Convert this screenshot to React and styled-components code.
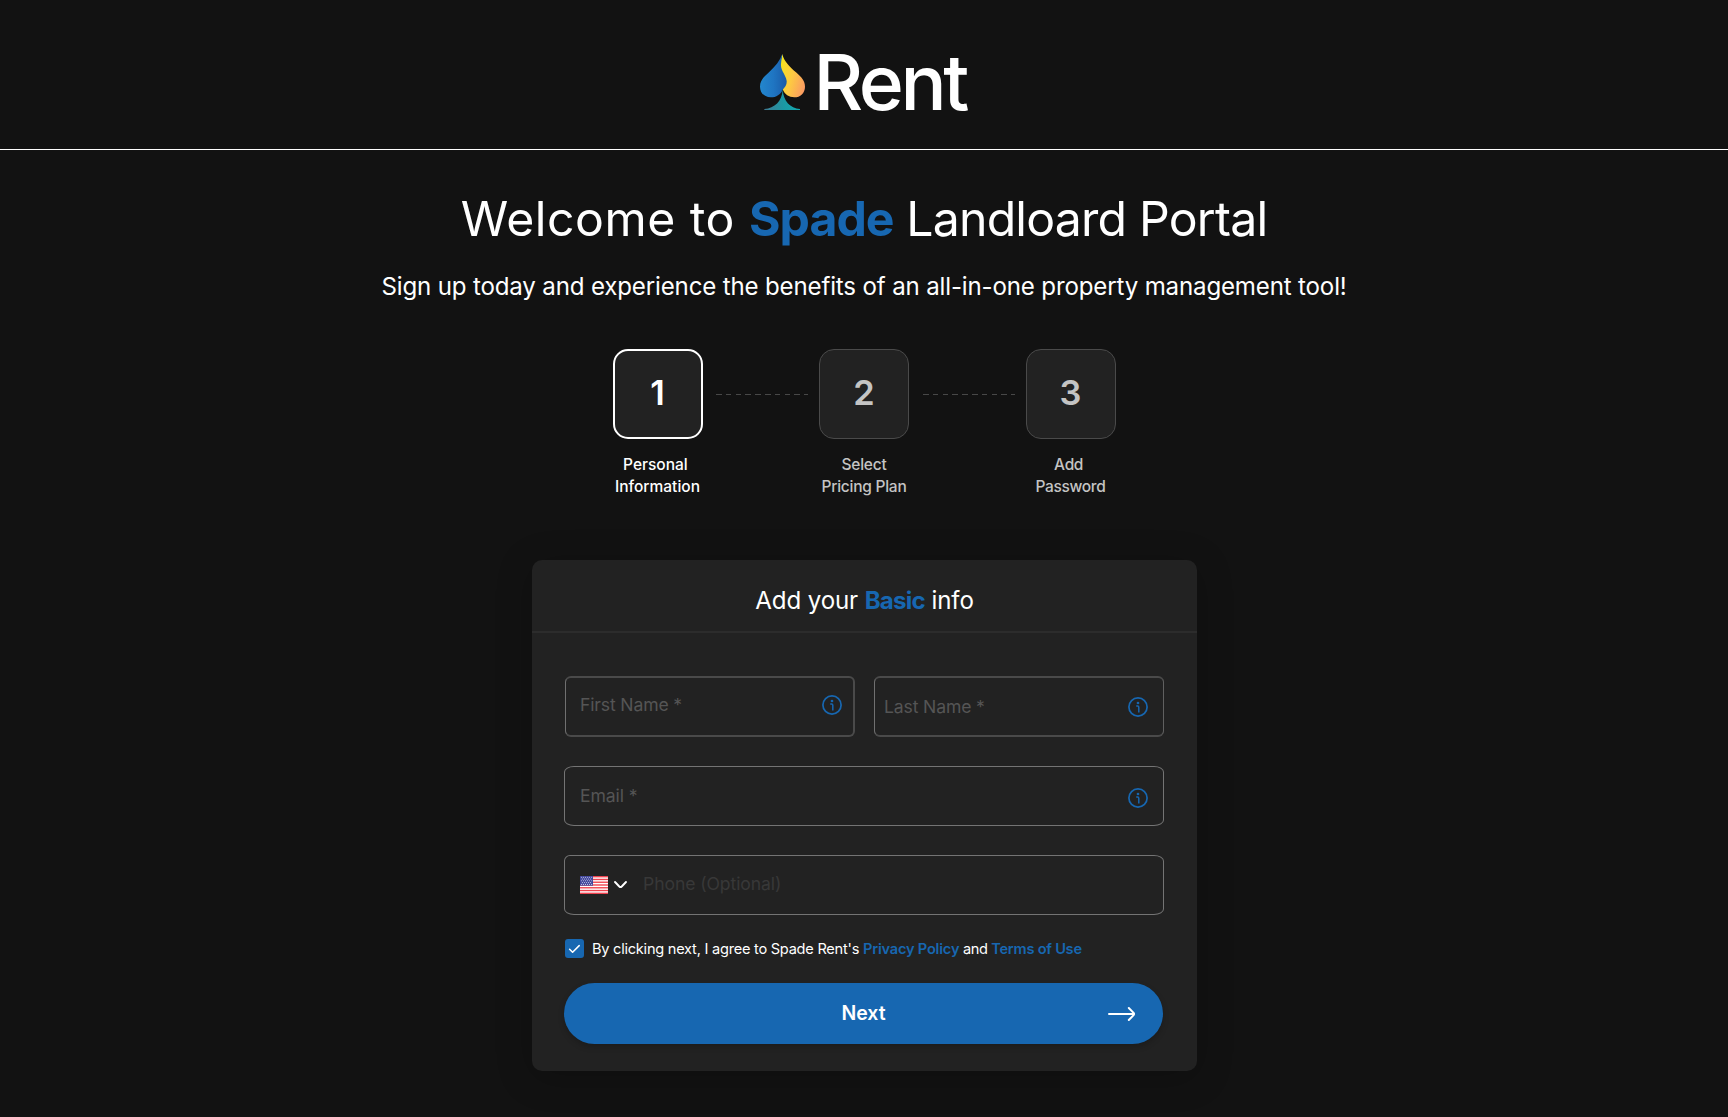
import React, { useState } from 'react';
import styled, { createGlobalStyle } from 'styled-components';

const blue = '#1767b1';

const GlobalStyle = createGlobalStyle`
  * { box-sizing: border-box; }
  body {
    margin: 0;
    background: #121212;
    color: #fff;
    font-family: Inter, 'Liberation Sans', sans-serif;
    overflow-x: hidden;
  }
`;

const Page = styled.div`
  min-height: 1117px;
  display: flex;
  flex-direction: column;
  align-items: center;
`;

const Header = styled.header`
  width: 100%;
  height: 150px;
  padding-top: 54px;
  border-bottom: 1px solid #fff;
  display: flex;
  justify-content: center;
`;

const Logo = styled.div`
  width: 209px;
  height: 57px;
  display: flex;
  gap: 8px;
`;

const LogoText = styled.span`
  font-size: 76.8px;
  font-weight: 530;
  line-height: 58px;
  letter-spacing: -3.4px;
  white-space: nowrap;
`;

const Segment = styled.span`
  letter-spacing: ${(p) => p.$track || 0}px;
`;

const Accent = styled(Segment)`
  color: ${blue};
  font-weight: ${(p) => p.$weight || 660};
`;

const Title = styled.h1`
  margin: 39px 0 0;
  font-size: 48.2px;
  font-weight: 370;
  line-height: 59px;
  white-space: nowrap;
`;

const Subtitle = styled.p`
  margin: 24px 0 0;
  font-size: 24.1px;
  font-weight: 370;
  line-height: 30px;
  letter-spacing: -0.165px;
  white-space: nowrap;
`;

const Steps = styled.div`
  display: flex;
  margin-top: 47px;
  height: 211px;
`;

const Step = styled.div`
  width: 90px;
  display: flex;
  flex-direction: column;
  align-items: center;
  color: ${(p) => (p.$active ? '#fff' : '#c4c4c4')};
`;

const StepBox = styled.div`
  width: 90px;
  height: 90px;
  flex: none;
  display: flex;
  align-items: center;
  justify-content: center;
  padding-bottom: 3px;
  border-radius: 15px;
  border: ${(p) => (p.$active ? '2px solid #fff' : '1px solid #4a4a4a')};
  background: #222;
  font-size: 34.4px;
  font-weight: 600;
`;

const StepLabel = styled.div`
  margin-top: 15px;
  font-size: 15.5px;
  font-weight: 500;
  line-height: 22.4px;
  text-align: center;
  white-space: pre;
  letter-spacing: ${(p) => p.$track}px;
`;

const Connector = styled.div`
  width: 92px;
  height: 1px;
  margin: 45px 11px 0 13.5px;
  background: repeating-linear-gradient(90deg, #484848 0 5.5px, transparent 5.5px 9.8px);
`;

const Card = styled.form`
  width: 665px;
  height: 511px;
  margin-left: 1px;
  border-radius: 10px;
  background: #222;
  box-shadow: 0 6px 36px rgba(0, 0, 0, 0.22);
`;

const CardHeader = styled.div`
  height: 73px;
  padding-top: 25px;
  border-bottom: 2px solid #2c2c2c;
  text-align: center;
  font-size: 24.1px;
  font-weight: 370;
  line-height: 32px;
  letter-spacing: -0.12px;
`;

const Fields = styled.div`
  padding: 43px 33px 0 32px;
  display: flex;
  flex-direction: column;
`;

const NameRow = styled.div`
  display: flex;
  gap: 19px;
  padding-left: 1px;
  margin-bottom: 29px;
`;

const Field = styled.label`
  display: flex;
  align-items: center;
  height: 60px;
  border: 1px solid #747474;
  border-radius: ${(p) => p.$corners || '10px / 6px'};
  padding: 0 15px;
`;

const NameField = styled(Field)`
  width: 290px;
  height: 61px;
  border-color: #4a4a4a;
  border-width: 2px ${(p) => (p.$last ? 1 : 2)}px 2px 1px;
  border-left-color: #707070;
  border-right-color: ${(p) => (p.$last ? '#606060' : '#4a4a4a')};
  border-radius: 6px;
  padding: ${(p) => (p.$last ? '0 15px 0 9px' : '0 11px 3px 14px')};
`;

const Input = styled.input`
  flex: 1;
  min-width: 0;
  height: 24px;
  padding: 0;
  border: 0;
  outline: 0;
  background: transparent;
  color: #fff;
  font: 400 17.6px/24px Inter, 'Liberation Sans', sans-serif;
  letter-spacing: ${(p) => p.$track}px;
  &::placeholder {
    color: ${(p) => p.$tint || '#555'};
    opacity: 1;
  }
`;

const PhoneField = styled(Field)`
  margin-top: 29px;
`;

const CountryPicker = styled.div`
  display: flex;
  align-items: center;
  gap: 5px;
  width: 63px;
`;

const PhoneInput = styled(Input)`
  margin-bottom: 3px;
`;

const IconSlot = styled.span`
  display: flex;
  padding-top: ${(p) => p.$drop || 0}px;
`;

const Terms = styled.div`
  display: flex;
  align-items: center;
  gap: 8px;
  height: 19px;
  margin: 24px 0 25px 1px;
  font-size: 14.6px;
  line-height: 19px;
  white-space: pre;
`;

const TermsText = styled.span`
  padding-top: 1px;
`;

const Checkbox = styled.span`
  width: 19px;
  height: 19px;
  display: flex;
  align-items: center;
  justify-content: center;
  border-radius: 3px;
  background: ${blue};
`;

const NextButton = styled.button`
  width: 599px;
  height: 61px;
  display: grid;
  grid-template-columns: 1fr auto 1fr;
  align-items: center;
  padding: 0 27px;
  border: 0;
  border-radius: 31px;
  background: ${blue};
  color: #fff;
  box-shadow: 0 3px 6px rgba(0, 0, 0, 0.2);
  font: 560 19.5px/24px Inter, 'Liberation Sans', sans-serif;
`;

const NextLabel = styled.span`
  grid-column: 2;
  padding-bottom: 2px;
`;

const ArrowSlot = styled.span`
  display: flex;
  justify-content: flex-end;
`;

const SpadeMark = () => (
  <svg width="46" height="57" viewBox="60 42 138 171">
    <defs>
      <linearGradient id="leafBlue" x1="0" x2="1" y1="0.5" y2="0.5">
        <stop offset="0" stopColor="#2387cd" />
        <stop offset="0.5" stopColor="#1f75c2" />
        <stop offset="1" stopColor="#1a5ba8" />
      </linearGradient>
      <linearGradient id="leafYellow" x1="0" x2="1" y1="0.3" y2="0.75">
        <stop offset="0" stopColor="#f4e31c" />
        <stop offset="0.5" stopColor="#fdc843" />
        <stop offset="1" stopColor="#fa9a62" />
      </linearGradient>
      <linearGradient id="stem" x1="0" x2="1">
        <stop offset="0" stopColor="#3f7a92" />
        <stop offset="0.55" stopColor="#1b99a4" />
        <stop offset="1" stopColor="#12a9b0" />
      </linearGradient>
    </defs>
    <path fill="url(#leafYellow)" d="M127 42C131 62 148 80 168 97C184 111 195 123 195 140C195 159 181 172 163 172C147 172 134 164 128 148L118 80Z" />
    <path fill="url(#leafBlue)" d="M127 42C120 62 106 79 87 97C71 111 60 122 60 140C60 159 74 172 92 172C109 172 122 163 128 149C136 142 141 133 140 123C138 105 121 92 123 72C124 61 126 52 127 42Z" />
    <path fill="url(#stem)" d="M128 149C126 184 104 204 73 207V210H180V207C150 204 131 184 128 149Z" />
  </svg>
);

const InfoIcon = () => (
  <svg width="20" height="20" viewBox="0 0 20 20" fill="none" stroke={blue} strokeWidth="1.7">
    <circle cx="10" cy="10" r="9.1" />
    <path d="M8.2 9.1H9.7Q10.8 9.1 10.8 10.2V15.6" strokeWidth="1.5" />
    <circle cx="10" cy="6" r="1.35" fill={blue} stroke="none" />
  </svg>
);

const Flag = () => (
  <svg width="28" height="18" viewBox="0 0 28 18">
    <rect width="28" height="18" fill="#fff" />
    {[0, 1, 2, 3, 4, 5, 6].map((i) => (
      <rect key={i} y={(i * 36) / 13} width="28" height={18 / 13} fill="#f0434f" />
    ))}
    <rect width="13" height="9.7" fill="#41479b" />
    {[0, 1, 2, 3, 4].map((r) =>
      [0, 1, 2, 3, 4, 5].slice(r % 2).map((c) => (
        <circle key={`${r}${c}`} cx={1.4 + c * 2.05 - (r % 2) * 1.02} cy={1.2 + r * 1.8} r="0.55" fill="#c9cbe8" />
      ))
    )}
  </svg>
);

const Chevron = () => (
  <svg width="15" height="10" viewBox="0 0 15 10" fill="none" stroke="#fff" strokeWidth="1.9" strokeLinecap="round" strokeLinejoin="round">
    <path d="M2 2L6.3 6.5Q7.5 7.6 8.7 6.5L13 2" />
  </svg>
);

const Check = () => (
  <svg width="13" height="10" viewBox="0 0 13 10" fill="none" stroke="#fff" strokeWidth="1.5" strokeLinecap="round" strokeLinejoin="round">
    <path d="M1.6 5.2L4.6 8.3L11.2 1.6" />
  </svg>
);

const Arrow = () => (
  <svg width="29" height="16" viewBox="0 0 29 16" fill="none" stroke="#fff" strokeWidth="2" strokeLinecap="round" strokeLinejoin="round">
    <path d="M2 8H27M21.8 2L26.6 6.9Q27.5 8 26.6 9.1L21.8 14" />
  </svg>
);

const steps = [
  { n: 1, label: 'Personal\u00a0\nInformation', track: 0 },
  { n: 2, label: 'Select\nPricing Plan', track: -0.25 },
  { n: 3, label: 'Add\u00a0\nPassword', track: -0.35 },
];

export default function App() {
  const [current] = useState(1);
  return (
    <Page>
      <GlobalStyle />
      <Header>
        <Logo>
          <SpadeMark />
          <LogoText>Rent</LogoText>
        </Logo>
      </Header>
      <Title>
        <Segment $track={0.5}>Welcome to </Segment>
        <Accent $track={-1}>Spade</Accent>
        <Segment $track={-0.8}> Landloard Portal</Segment>
      </Title>
      <Subtitle>Sign up today and experience the benefits of an all-in-one property management tool!</Subtitle>
      <Steps>
        {steps.map((s, i) => (
          <React.Fragment key={s.n}>
            {i > 0 && <Connector />}
            <Step $active={s.n === current}>
              <StepBox $active={s.n === current}>{s.n}</StepBox>
              <StepLabel $track={s.track}>{s.label}</StepLabel>
            </Step>
          </React.Fragment>
        ))}
      </Steps>
      <Card onSubmit={(e) => e.preventDefault()}>
        <CardHeader>
          Add your <Accent $track={-0.8}>Basic</Accent> info
        </CardHeader>
        <Fields>
          <NameRow>
            <NameField>
              <Input placeholder="First Name *" $track={-0.15} />
              <IconSlot><InfoIcon /></IconSlot>
            </NameField>
            <NameField $last>
              <Input placeholder="Last Name *" $track={-0.15} />
              <IconSlot><InfoIcon /></IconSlot>
            </NameField>
          </NameRow>
          <Field>
            <Input placeholder="Email *" $track={-0.1} />
            <IconSlot $drop={4}><InfoIcon /></IconSlot>
          </Field>
          <PhoneField $corners="6px 10px 10px 10px / 6px">
            <CountryPicker>
              <Flag />
              <Chevron />
            </CountryPicker>
            <PhoneInput placeholder="Phone (Optional)" $track={-0.1} $tint="#383838" />
          </PhoneField>
          <Terms>
            <Checkbox><Check /></Checkbox>
            <TermsText>
              <Segment $track={-0.25}>By clicking next, I agree to Spade Rent's </Segment>
              <Accent $weight={600} $track={-0.2}>Privacy Policy</Accent>
              <Segment $track={-0.4}> and </Segment>
              <Accent $weight={600} $track={-0.25}>Terms of Use</Accent>
            </TermsText>
          </Terms>
          <NextButton type="submit">
            <NextLabel>Next</NextLabel>
            <ArrowSlot><Arrow /></ArrowSlot>
          </NextButton>
        </Fields>
      </Card>
    </Page>
  );
}
